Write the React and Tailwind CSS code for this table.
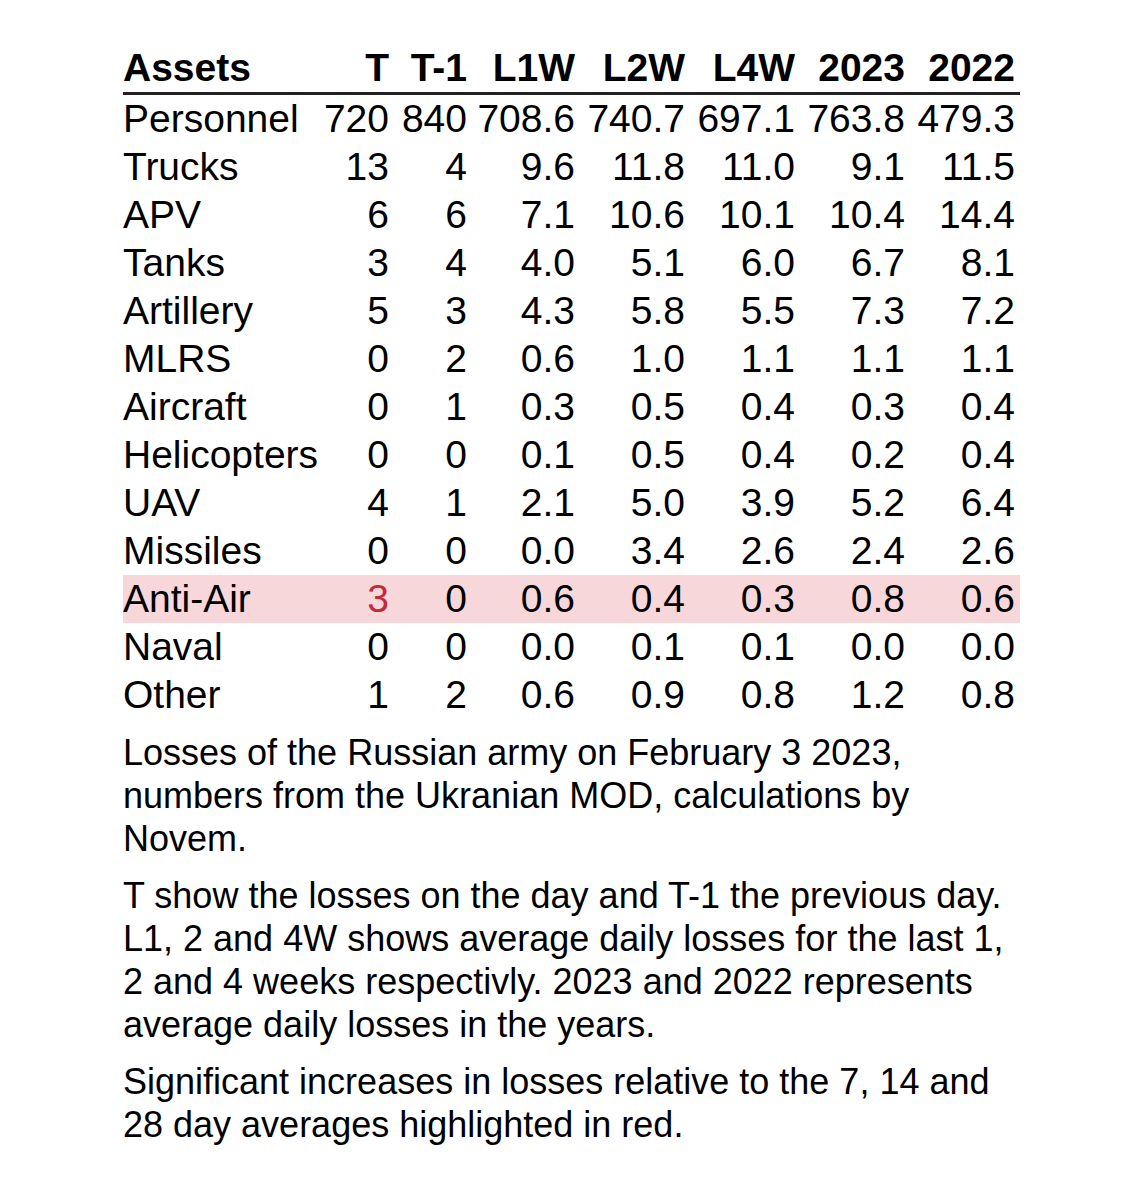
import React from 'react';

const cols = ['T', 'T-1', 'L1W', 'L2W', 'L4W', '2023', '2022'];

const rows = [
  ['Personnel', '720', '840', '708.6', '740.7', '697.1', '763.8', '479.3'],
  ['Trucks', '13', '4', '9.6', '11.8', '11.0', '9.1', '11.5'],
  ['APV', '6', '6', '7.1', '10.6', '10.1', '10.4', '14.4'],
  ['Tanks', '3', '4', '4.0', '5.1', '6.0', '6.7', '8.1'],
  ['Artillery', '5', '3', '4.3', '5.8', '5.5', '7.3', '7.2'],
  ['MLRS', '0', '2', '0.6', '1.0', '1.1', '1.1', '1.1'],
  ['Aircraft', '0', '1', '0.3', '0.5', '0.4', '0.3', '0.4'],
  ['Helicopters', '0', '0', '0.1', '0.5', '0.4', '0.2', '0.4'],
  ['UAV', '4', '1', '2.1', '5.0', '3.9', '5.2', '6.4'],
  ['Missiles', '0', '0', '0.0', '3.4', '2.6', '2.4', '2.6'],
  ['Anti-Air', '3', '0', '0.6', '0.4', '0.3', '0.8', '0.6'],
  ['Naval', '0', '0', '0.0', '0.1', '0.1', '0.0', '0.0'],
  ['Other', '1', '2', '0.6', '0.9', '0.8', '1.2', '0.8'],
];

// rows with a highlighted row, and which cells are red in it
const highlight = { 'Anti-Air': [1] };

const grid = 'grid grid-cols-[193px_78px_78px_108px_110px_110px_110px_110px]';

function App() {
  return (
    <div className="min-h-[1182px] bg-white text-black" style={{ fontFamily: '"Liberation Sans", Arial, sans-serif' }}>
      <div className="ml-[123px] w-[897px] pt-[44px]">
        <div className={grid + ' border-b-[3px] border-[#222] text-[39px] font-bold leading-[48px]'}>
          <div>Assets</div>
          {cols.map((c) => (
            <div key={c} className="pr-[5px] text-right">{c}</div>
          ))}
        </div>

        {rows.map((r) => {
          const red = highlight[r[0]];
          return (
            <div key={r[0]} className={grid + ' text-[39px] leading-[48px] ' + (red ? 'bg-[#f8d7da]' : '')}>
              <div className="whitespace-nowrap">{r[0]}</div>
              {r.slice(1).map((v, i) => (
                <div key={i} className={'pr-[5px] text-right ' + (red && red.includes(i + 1) ? 'text-[#c22a3a]' : '')}>
                  {v}
                </div>
              ))}
            </div>
          );
        })}

        <div className="mt-[12px] flex flex-col gap-[14px] text-[36px] leading-[43px]">
          <p>Losses of the Russian army on February 3 2023, numbers from the Ukranian MOD, calculations by Novem.</p>
          <p>
            T show the losses on the day and T-1 the previous day. L1, 2 and 4W shows average daily losses for the last 1, 2
            and 4 weeks respectivly. 2023 and 2022 represents average daily losses in the years.
          </p>
          <p>Significant increases in losses relative to the 7, 14 and 28 day averages highlighted in red.</p>
        </div>
      </div>
    </div>
  );
}

export default App;
